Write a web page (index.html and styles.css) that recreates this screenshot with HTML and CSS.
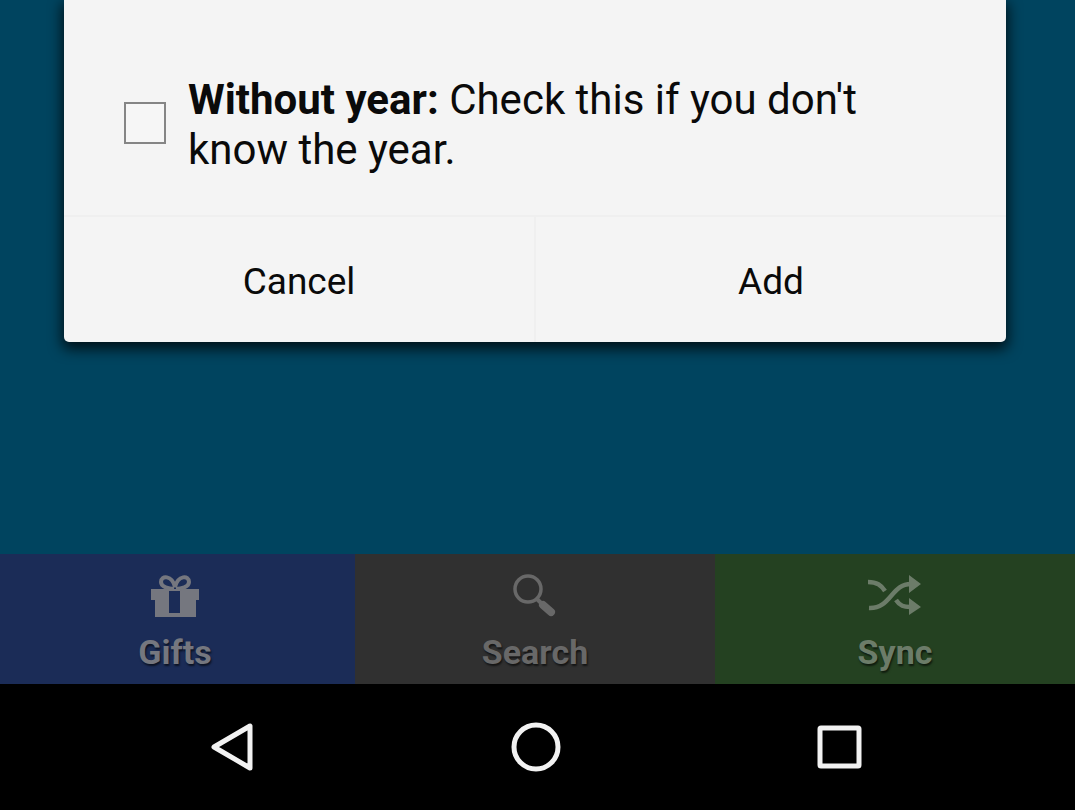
FILE: index.html
```html
<!DOCTYPE html>
<html lang="en">
<head>
<meta charset="utf-8">
<meta name="viewport" content="width=device-width, initial-scale=1">
<title>Add birthday</title>
<link rel="stylesheet" href="styles.css">
</head>
<body>
<main class="stage">
  <form class="dialog" role="dialog" aria-label="Add">
    <div class="option">
      <input class="option-box" type="checkbox" id="without-year">
      <label class="option-text" for="without-year"><strong>Without year:</strong> Check this if you don't know the year.</label>
    </div>
    <div class="actions">
      <button class="action" type="button">Cancel</button>
      <button class="action" type="button">Add</button>
    </div>
  </form>
</main>
<div class="tabs">
  <button class="tab tab-gifts" type="button">
    <svg class="tab-icon" viewBox="0 0 56 48" aria-hidden="true">
      <path fill="currentColor" fill-rule="evenodd" d="M4 15H52V26H49V43H8V26H4ZM22 17V39H33V17Z"/>
      <path fill="none" stroke="currentColor" stroke-width="4" d="M27 15C22 15 14 13 14 8C14 1 25 1 28 13C31 1 42 1 42 8C42 13 34 15 29 15"/>
    </svg>
    <span>Gifts</span>
  </button>
  <button class="tab tab-search" type="button">
    <svg class="tab-icon" viewBox="0 0 56 48" aria-hidden="true">
      <circle cx="21" cy="15" r="13" fill="none" stroke="currentColor" stroke-width="3.5"/>
      <path fill="none" stroke="currentColor" stroke-width="4" d="M30 25L35 30"/>
      <path fill="none" stroke="currentColor" stroke-width="8" stroke-linecap="round" d="M36 31L44 38"/>
    </svg>
    <span>Search</span>
  </button>
  <button class="tab tab-sync" type="button">
    <svg class="tab-icon" viewBox="0 0 56 48" aria-hidden="true">
      <path fill="none" stroke="currentColor" stroke-width="4.5" d="M1 8C10 8 14 11 18 17M2 34C24 35 24 10 44 10M29 26C33 32 37 33 43 33"/>
      <path fill="currentColor" d="M42 1L54 10L42 19ZM42 24L54 33L42 41Z"/>
    </svg>
    <span>Sync</span>
  </button>
</div>
<nav class="system" aria-label="System navigation">
  <button class="key" type="button" aria-label="Back">
    <svg class="key-icon" viewBox="0 0 50 50"><path d="M43 4V46L7 25Z"/></svg>
  </button>
  <button class="key" type="button" aria-label="Home">
    <svg class="key-icon" viewBox="0 0 50 50"><circle cx="25" cy="25" r="22"/></svg>
  </button>
  <button class="key" type="button" aria-label="Recent apps">
    <svg class="key-icon" viewBox="0 0 50 50"><rect x="6" y="6" width="39" height="38" rx="1"/></svg>
  </button>
</nav>
</body>
</html>
```
FILE: styles.css
```css
* {
  box-sizing: border-box;
}

body {
  margin: 0;
  min-height: 100vh;
  display: flex;
  flex-direction: column;
  background: #00445f;
  color: #0a0a0a;
  font-family: Roboto, "Liberation Sans", sans-serif;
}

button {
  margin: 0;
  padding: 0;
  border: 0;
  background: none;
  color: inherit;
  font: inherit;
}

.stage {
  flex: 1;
  padding: 0 69px 32px 64px;
}

.dialog {
  background: #f4f4f4;
  border-radius: 0 0 5px 5px;
  box-shadow: 0 5px 14px 2px rgba(0, 0, 0, 0.75);
}

.option {
  display: flex;
  align-items: center;
  gap: 22px;
  padding: 75px 60px 40px;
}

.option-box {
  appearance: none;
  flex: none;
  width: 42px;
  height: 42px;
  margin: 0 0 4px;
  border: 2px solid #858585;
  background: #f6f6f6;
}

.option-box:checked {
  background: #858585;
}

.option-text {
  font-size: 42px;
  line-height: 50px;
}

.actions {
  display: flex;
  border-top: 2px solid #efefef;
}

.action {
  flex: 1;
  height: 125px;
  padding-top: 4px;
  font-size: 37px;
}

.action + .action {
  border-left: 2px solid #efefef;
}

.tabs {
  display: grid;
  grid-template-columns: 355fr 360fr 360fr;
}

.tab {
  height: 130px;
  display: flex;
  flex-direction: column;
  align-items: center;
  padding-top: 20px;
  gap: 8px;
  color: #747474;
  font-size: 34px;
  font-weight: 700;
  line-height: 44px;
  text-shadow: 1px 2px 2px rgba(0, 0, 0, 0.6);
}

.tab-icon {
  width: 56px;
  height: 48px;
}

.tab-gifts {
  padding-right: 5px;
  background: #1b2c57;
  color: #75777f;
}

.tab-search {
  background: #303030;
  color: #686868;
}

.tab-sync {
  background: #244121;
  color: #6c7c69;
}

.system {
  display: flex;
  height: 126px;
  padding: 0 84px 0 80px;
  background: #000;
}

.key {
  flex: 1;
  display: flex;
  align-items: center;
  justify-content: center;
}

.key-icon {
  width: 50px;
  height: 50px;
  fill: none;
  stroke: #f2f2f2;
  stroke-width: 5;
  stroke-linejoin: round;
}
```
